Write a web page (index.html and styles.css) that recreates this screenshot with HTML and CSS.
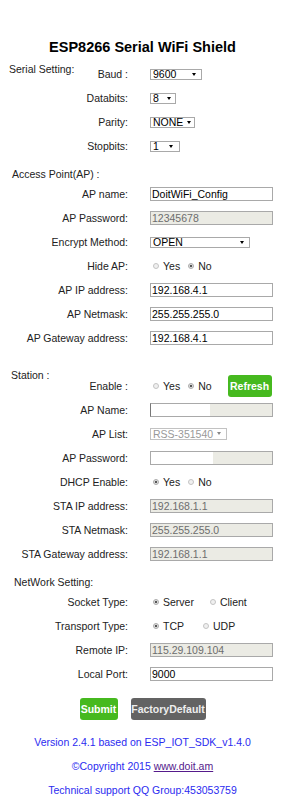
FILE: index.html
```html
<!DOCTYPE html>
<html>
<head>
  <meta charset="UTF-8">
  <title>ESP8266 Serial WiFi Shield</title>
  <link rel="stylesheet" href="styles.css">
</head>
<body>
  <h1 class="title">ESP8266 Serial WiFi Shield</h1>

  <!-- Serial -->
  <div class="row">
    <div class="lbl split"><span class="sec-in">Serial Setting:</span><span>Baud :</span></div>
    <span class="sel w52"><select><option>9600</option></select></span>
  </div>
  <div class="row">
    <div class="lbl">Databits:</div>
    <span class="sel w26"><select><option>8</option></select></span>
  </div>
  <div class="row">
    <div class="lbl">Parity:</div>
    <span class="sel w45"><select><option>NONE</option></select></span>
  </div>
  <div class="row">
    <div class="lbl">Stopbits:</div>
    <span class="sel w30"><select><option>1</option></select></span>
  </div>

  <!-- Access point -->
  <div class="sec sec-ap">Access Point(AP) :</div>
  <div class="row">
    <div class="lbl">AP name:</div>
    <input class="txt" type="text" value="DoitWiFi_Config">
  </div>
  <div class="row">
    <div class="lbl">AP Password:</div>
    <input class="txt" type="text" value="12345678" disabled>
  </div>
  <div class="row">
    <div class="lbl">Encrypt Method:</div>
    <span class="sel w100"><select><option>OPEN</option></select></span>
  </div>
  <div class="row">
    <div class="lbl">Hide AP:</div>
    <label class="opt"><input type="radio" name="hide">Yes</label>
    <label class="opt"><input type="radio" name="hide" checked>No</label>
  </div>
  <div class="row">
    <div class="lbl">AP IP address:</div>
    <input class="txt" type="text" value="192.168.4.1">
  </div>
  <div class="row">
    <div class="lbl">AP Netmask:</div>
    <input class="txt" type="text" value="255.255.255.0">
  </div>
  <div class="row">
    <div class="lbl">AP Gateway address:</div>
    <input class="txt" type="text" value="192.168.4.1">
  </div>

  <!-- Station -->
  <div class="sec sec-sta">Station :</div>
  <div class="row row-first">
    <div class="lbl">Enable :</div>
    <label class="opt"><input type="radio" name="sta">Yes</label>
    <label class="opt"><input type="radio" name="sta" checked>No</label>
    <button class="btn green refresh">Refresh</button>
  </div>
  <div class="row">
    <div class="lbl">AP Name:</div>
    <input class="txt half" type="text" value="">
  </div>
  <div class="row">
    <div class="lbl">AP List:</div>
    <span class="sel w77 off"><select disabled><option>RSS-351540</option></select></span>
  </div>
  <div class="row">
    <div class="lbl">AP Password:</div>
    <input class="txt half pw" type="text" value="">
  </div>
  <div class="row">
    <div class="lbl">DHCP Enable:</div>
    <label class="opt"><input type="radio" name="dhcp" checked>Yes</label>
    <label class="opt"><input type="radio" name="dhcp">No</label>
  </div>
  <div class="row">
    <div class="lbl">STA IP address:</div>
    <input class="txt" type="text" value="192.168.1.1" disabled>
  </div>
  <div class="row">
    <div class="lbl">STA Netmask:</div>
    <input class="txt" type="text" value="255.255.255.0" disabled>
  </div>
  <div class="row">
    <div class="lbl">STA Gateway address:</div>
    <input class="txt" type="text" value="192.168.1.1" disabled>
  </div>

  <!-- Network -->
  <div class="sec sec-net">NetWork Setting:</div>
  <div class="row">
    <div class="lbl">Socket Type:</div>
    <label class="opt wide"><input type="radio" name="sock" checked>Server</label>
    <label class="opt"><input type="radio" name="sock">Client</label>
  </div>
  <div class="row">
    <div class="lbl">Transport Type:</div>
    <label class="opt wider"><input type="radio" name="tp" checked>TCP</label>
    <label class="opt"><input type="radio" name="tp">UDP</label>
  </div>
  <div class="row">
    <div class="lbl">Remote IP:</div>
    <input class="txt" type="text" value="115.29.109.104" disabled>
  </div>
  <div class="row">
    <div class="lbl">Local Port:</div>
    <input class="txt" type="text" value="9000">
  </div>

  <div class="actions">
    <button class="btn green submit">Submit</button>
    <button class="btn grey">FactoryDefault</button>
  </div>

  <div class="footer">
    <p>Version 2.4.1 based on ESP_IOT_SDK_v1.4.0</p>
    <p>&copy;Copyright 2015 <a href="#">www.doit.am </a></p>
    <p>Technical support QQ Group:453053759</p>
  </div>
</body>
</html>
```

FILE: styles.css
```css
/* ESP8266 config page */
body {
  font-family: "Liberation Sans", Arial, sans-serif;
  font-size: 10.5px;
  color: #222;
  margin: 0;
  padding: 0;
  width: 285px;
}

.title {
  font-size: 14.5px;
  line-height: 20px;
  text-align: center;
  color: #000;
  margin: 37px 0 5px;
}

.row {
  display: flex;
  align-items: center;
  height: 24px;
}

.row-first {
  margin-top: -8px;
}

.lbl {
  width: 128px;
  margin-right: 22px;
  text-align: right;
  flex-shrink: 0;
}

.split {
  display: flex;
  justify-content: space-between;
  padding-left: 9px;
  box-sizing: border-box;
}

.sec-in {
  margin-top: -5px;
}

.sec {
  line-height: 16px;
  margin-top: 8px;
}

.sec-ap {
  padding-left: 12px;
}

.sec-sta {
  line-height: 14px;
  margin-top: 18px;
  padding-left: 11px;
}

.sec-net {
  padding-left: 14px;
}

/* text inputs */
.txt {
  width: 123px;
  height: 14px;
  box-sizing: border-box;
  border: 1px solid #a9a9a9;
  padding: 0 1px;
  margin: 0;
  font-family: inherit;
  font-size: 10.5px;
  color: #000;
  background: #fff;
}

.txt:disabled {
  background: #ebebe4;
  color: #6d6d6d;
}

/* half-greyed station fields */
.half {
  box-shadow: inset -62px 0 0 #ebebe4;
  border-left-color: #777;
}

.pw {
  box-shadow: inset -59px 0 0 #ebebe4;
  border-left-color: #a9a9a9;
}

/* selects */
.sel {
  position: relative;
  display: inline-block;
}

.sel select {
  appearance: none;
  -webkit-appearance: none;
  width: 100%;
  height: 11px;
  box-sizing: border-box;
  border: 1px solid #a9a9a9;
  border-radius: 0;
  background: #fff;
  padding: 0 0 0 2px;
  margin: 0;
  font-family: inherit;
  font-size: 10.5px;
  line-height: 9px;
  color: #000;
  display: block;
}

.sel::after {
  content: "";
  position: absolute;
  right: 6px;
  top: 4px;
  border-left: 2px solid transparent;
  border-right: 2px solid transparent;
  border-top: 3px solid #000;
}

.sel.off select {
  color: #6d6d6d;
  background: #fff;
  height: 12px;
}

.sel.off::after {
  border-top-color: #888;
}

.w52 { width: 52px; }
.w26 { width: 26px; }
.w45 { width: 45px; }
.w30 { width: 30px; }
.w100 { width: 100px; }
.w77 { width: 77px; }

.w26::after { right: 5px; }
.w45::after { right: 4px; }
.w30::after { right: 7px; }

/* radios */
.opt {
  display: inline-flex;
  align-items: center;
  margin-right: 5px;
}

.opt input {
  appearance: none;
  -webkit-appearance: none;
  width: 6px;
  height: 6px;
  margin: 0 4px 0 3px;
  border: 1px solid #c4c4c4;
  border-radius: 50%;
  background: #f0f0f0;
  box-sizing: border-box;
}

.opt input:checked {
  background: radial-gradient(circle, #555 0 1.3px, #e6e6e6 1.6px);
  border-color: #aaa;
}

.wide {
  margin-right: 13px;
}

.wider {
  margin-right: 16px;
}

/* buttons */
.btn {
  border: 0;
  border-radius: 3px;
  height: 22px;
  padding: 0;
  font-family: inherit;
  font-size: 10.5px;
  font-weight: bold;
  color: #fff;
}

.green {
  background-color: #46b91f;
}

.grey {
  background-color: #636363;
  color: #eee;
  width: 75px;
}

.refresh {
  width: 44px;
  margin-left: 11px;
}

.submit {
  width: 38px;
}

.actions {
  display: flex;
  justify-content: center;
  gap: 13px;
  margin-top: 12px;
}

.footer {
  margin-top: 10px;
  text-align: center;
  color: #2b2bf0;
}

.footer p {
  margin: 0;
  line-height: 24px;
}

.footer a {
  color: #551a8b;
}
```
